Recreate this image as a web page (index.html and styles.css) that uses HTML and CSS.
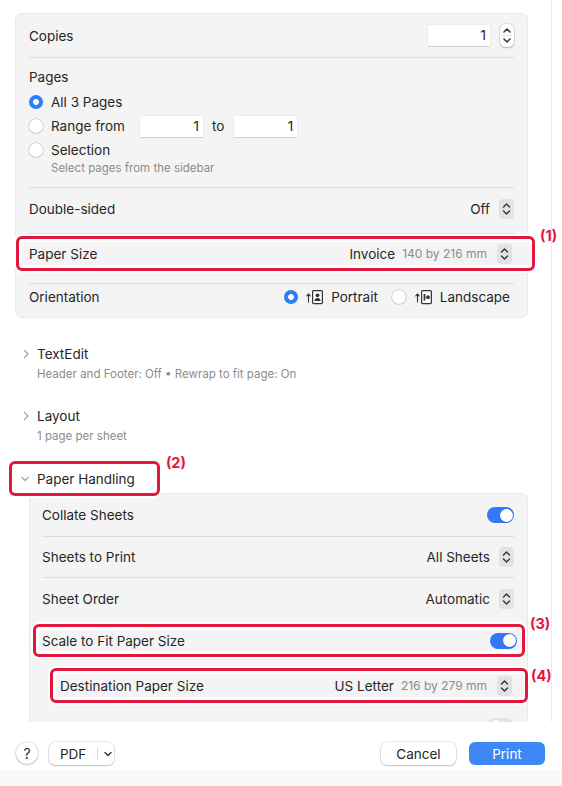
FILE: index.html
```html
<!DOCTYPE html>
<html lang="en">
<head>
    <meta charset="UTF-8">
    <meta name="viewport" content="width=device-width, initial-scale=1.0">
    <title>Print</title>
    <link rel="stylesheet" href="styles.css">
</head>
<body>
<div class="window">
    <main class="scroller">

        <!-- main print options -->
        <section class="panel">
            <div class="row copies">
                <span>Copies</span>
                <div class="spin">
                    <span class="field copies-field">1</span>
                    <span class="stepper">
                        <svg width="14" height="23" viewBox="0 0 14 23"><path d="M4 8 L7 5 L10 8" /><line x1="2" y1="11.5" x2="12" y2="11.5" class="split" /><path d="M4 15 L7 18 L10 15" /></svg>
                    </span>
                </div>
            </div>

            <div class="pages">
                <div class="pages-title">Pages</div>
                <div class="radio-row"><span class="radio on"></span>All 3 Pages</div>
                <div class="radio-row"><span class="radio"></span>Range from<span class="field range-field range-from">1</span><span class="to">to</span><span class="field range-field">1</span></div>
                <div class="radio-row"><span class="radio"></span>Selection</div>
                <div class="hint">Select pages from the sidebar</div>
            </div>

            <div class="row double">
                <span>Double-sided</span>
                <div class="value">
                    <span>Off</span>
                    <span class="popup"><svg width="9" height="14" viewBox="0 0 9 14"><path d="M1.5 5 L4.5 2 L7.5 5" /><path d="M1.5 9 L4.5 12 L7.5 9" /></svg></span>
                </div>
            </div>

            <div class="row marked">
                <div class="mark mark-paper">
                    <div class="mark-inner">
                        <span>Paper Size</span>
                        <div class="value">
                            <span>Invoice</span>
                            <span class="dim">140 by 216 mm</span>
                            <span class="popup"><svg width="9" height="14" viewBox="0 0 9 14"><path d="M1.5 5 L4.5 2 L7.5 5" /><path d="M1.5 9 L4.5 12 L7.5 9" /></svg></span>
                        </div>
                    </div>
                    <span class="tag">(1)</span>
                </div>
            </div>

            <div class="row orient">
                <span>Orientation</span>
                <div class="orient-choices">
                    <span class="radio on"></span>
                    <svg class="orient-icon" width="17" height="16" viewBox="0 0 17 16">
                        <path class="arrow" d="M2.5 13 V5 M0.8 6.8 L2.5 5 L4.2 6.8" />
                        <rect class="sheet" x="6.6" y="1.6" width="9.8" height="13" rx="1" />
                        <circle cx="11.5" cy="6.3" r="1.9" class="fill" />
                        <path class="fill" d="M8.4 12 Q8.6 8.9 11.5 8.9 Q14.4 8.9 14.6 12 Z" />
                    </svg>
                    <span class="orient-label">Portrait</span>
                    <span class="radio land-radio"></span>
                    <svg class="orient-icon" width="17" height="16" viewBox="0 0 17 16">
                        <path class="arrow" d="M2.5 13 V5 M0.8 6.8 L2.5 5 L4.2 6.8" />
                        <rect class="sheet" x="6.6" y="1.6" width="9.8" height="13" rx="1" />
                        <rect class="fill" x="8.6" y="5" width="1.8" height="6.4" />
                        <circle cx="13" cy="8.2" r="1.9" class="fill" />
                    </svg>
                    <span>Landscape</span>
                </div>
            </div>
        </section>

        <!-- collapsed groups -->
        <section class="group first">
            <div class="group-head">
                <svg class="chev" width="8" height="10" viewBox="0 0 8 10"><path d="M2.5 1.5 L6 5 L2.5 8.5" /></svg>
                <span>TextEdit</span>
            </div>
            <div class="group-sub">Header and Footer: Off &bull; Rewrap to fit page: On</div>
        </section>

        <section class="group">
            <div class="group-head">
                <svg class="chev" width="8" height="10" viewBox="0 0 8 10"><path d="M2.5 1.5 L6 5 L2.5 8.5" /></svg>
                <span>Layout</span>
            </div>
            <div class="group-sub">1 page per sheet</div>
        </section>

        <section class="group open">
            <div class="mark-head">
                <svg class="chev" width="8" height="10" viewBox="0 0 8 10"><path d="M1 3.5 L4 6.5 L7 3.5" /></svg>
                <span>Paper Handling</span>
                <span class="tag">(2)</span>
            </div>
        </section>

        <!-- paper handling options -->
        <section class="panel sub">
            <div class="row collate">
                <span>Collate Sheets</span>
                <span class="toggle"><span class="knob"></span></span>
            </div>
            <div class="row sheets">
                <span>Sheets to Print</span>
                <div class="value">
                    <span>All Sheets</span>
                    <span class="popup"><svg width="9" height="14" viewBox="0 0 9 14"><path d="M1.5 5 L4.5 2 L7.5 5" /><path d="M1.5 9 L4.5 12 L7.5 9" /></svg></span>
                </div>
            </div>
            <div class="row order">
                <span>Sheet Order</span>
                <div class="value">
                    <span>Automatic</span>
                    <span class="popup"><svg width="9" height="14" viewBox="0 0 9 14"><path d="M1.5 5 L4.5 2 L7.5 5" /><path d="M1.5 9 L4.5 12 L7.5 9" /></svg></span>
                </div>
            </div>

            <div class="mark mark-scale">
                <div class="mark-inner">
                    <span>Scale to Fit Paper Size</span>
                    <span class="toggle"><span class="knob"></span></span>
                </div>
                <span class="tag">(3)</span>
            </div>

            <div class="mark mark-dest">
                <div class="mark-inner">
                    <span>Destination Paper Size</span>
                    <div class="value">
                        <span>US Letter</span>
                        <span class="dim">216 by 279 mm</span>
                        <span class="popup"><svg width="9" height="14" viewBox="0 0 9 14"><path d="M1.5 5 L4.5 2 L7.5 5" /><path d="M1.5 9 L4.5 12 L7.5 9" /></svg></span>
                    </div>
                </div>
                <span class="tag">(4)</span>
            </div>

            <div class="peek">
                <span class="toggle off"><span class="knob"></span></span>
            </div>
        </section>
    </main>

    <footer class="footer">
        <button class="help">?</button>
        <div class="pdf">
            <span>PDF</span>
            <span class="pdf-split"></span>
            <svg width="8" height="6" viewBox="0 0 8 6"><path d="M1 1.5 L4 4.5 L7 1.5" /></svg>
        </div>
        <button class="btn cancel">Cancel</button>
        <button class="btn print">Print</button>
    </footer>
    <div class="footer-strip"></div>
</div>
</body>
</html>
```

FILE: styles.css
```css
* {
    box-sizing: border-box;
}
body {
    margin: 0;
    background-color: #fff;
    font-family: Inter, "Liberation Sans", sans-serif;
    font-size: 13.5px;
    color: #262626;
}
.window {
    width: 562px;
    height: 786px;
    display: flex;
    flex-direction: column;
    overflow: hidden;
}
/* clips at the bottom only, so the side notes can pass the divider */
.scroller {
    flex: none;
    width: 552px;
    height: 722px;
    padding: 13px 0 0 15px;
    border-right: 1px solid #ececec;
    clip-path: inset(0 -12px 0 0);
}

/* panels and rows */
.panel {
    width: 513px;
    background-color: #f4f4f4;
    border: 1px solid #e9e9e9;
    border-radius: 7px;
    padding: 0 13px;
}
.row {
    display: flex;
    align-items: center;
    justify-content: space-between;
    border-bottom: 1px solid #dddddd;
}
.copies {
    height: 44px;
}
.spin {
    display: flex;
    align-items: center;
    gap: 10px;
}
.field {
    display: inline-block;
    height: 21px;
    line-height: 21px;
    background-color: #fff;
    text-align: right;
    padding-right: 4px;
    box-shadow: 0 1px 0 rgba(0, 0, 0, 0.12), 0 0 0 0.5px rgba(0, 0, 0, 0.06);
}
.copies-field {
    width: 62px;
}
.stepper {
    width: 14px;
    height: 23px;
    border-radius: 5px;
    background-color: #fff;
    box-shadow: 0 0 0 0.5px rgba(0, 0, 0, 0.18), 0 1px 1.5px rgba(0, 0, 0, 0.18);
}
.stepper svg {
    display: block;
}
.stepper path {
    fill: none;
    stroke: #333;
    stroke-width: 1.5;
    stroke-linecap: round;
    stroke-linejoin: round;
}
.stepper .split {
    stroke: #e2e2e2;
    stroke-width: 1;
}

.pages {
    padding: 10px 0 12px;
    border-bottom: 1px solid #dddddd;
}
.pages-title {
    line-height: 18px;
    margin-bottom: 4px;
}
.radio-row {
    display: flex;
    align-items: center;
    height: 24px;
}
.radio {
    flex: none;
    width: 14px;
    height: 14px;
    border-radius: 50%;
    background-color: #fff;
    margin-right: 8px;
    box-shadow: 0 0 0 0.5px rgba(0, 0, 0, 0.22), 0 0.5px 1.5px rgba(0, 0, 0, 0.15);
}
.radio.on {
    background: radial-gradient(circle, #fff 2.6px, #2f7cf6 3.2px);
    box-shadow: none;
}
.range-field {
    width: 63px;
}
.range-from {
    margin-left: 15px;
}
.to {
    margin: 0 10px 0 9px;
}
.hint {
    margin-top: -1px;
    padding-left: 22px;
    line-height: 14px;
    font-size: 11.5px;
    color: #8c8c8c;
}

.double {
    height: 46px;
    padding-bottom: 4px;
}
.value {
    display: flex;
    align-items: center;
    gap: 9px;
}
.dim {
    font-size: 12px;
    color: #8c8c8c;
    margin-left: -2px;
    margin-right: 1px;
}
.popup {
    width: 15px;
    height: 20px;
    border-radius: 4px;
    background-color: #e3e3e3;
    display: flex;
    align-items: center;
    justify-content: center;
}
.popup path {
    fill: none;
    stroke: #333;
    stroke-width: 1.4;
    stroke-linecap: round;
    stroke-linejoin: round;
}

/* red annotation boxes */
.marked {
    height: 50px;
    align-items: flex-start;
    padding-top: 2px;
}
.mark {
    position: relative;
    border: 3px solid #e3173e;
    border-radius: 6px;
    background-color: #fff;
    box-shadow: 0 0 0 2px #fff;
}
.mark-inner {
    display: flex;
    align-items: center;
    justify-content: space-between;
    background-color: #f4f4f4;
    border-radius: 2px;
}
.mark-paper {
    flex: 1;
    margin: 0 -21px 0 -13px;
    padding: 3px 1px 3px 3px;
}
.mark-paper .mark-inner {
    height: 23px;
    padding: 0 19px 0 7px;
}
.tag {
    position: absolute;
    left: calc(100% + 8px);
    top: -12px;
    color: #e3173e;
    font-weight: 700;
    font-size: 14.5px;
    line-height: 18px;
}

.orient {
    height: 33px;
    padding-bottom: 8px;
    border-bottom: none;
}
.orient-choices {
    display: flex;
    align-items: center;
    padding-right: 4px;
}
.orient-icon {
    margin-right: 8px;
}
.orient-icon .arrow {
    fill: none;
    stroke: #333;
    stroke-width: 1.1;
    stroke-linecap: round;
    stroke-linejoin: round;
}
.orient-icon .sheet {
    fill: #fff;
    stroke: #333;
    stroke-width: 1.2;
}
.orient-icon .fill {
    fill: #333;
}
.orient-label {
    margin-right: 14px;
}
.land-radio {
    margin-right: 9px;
}

/* disclosure groups */
.group {
    padding-left: 7px;
    margin-top: 26px;
}
.group.first {
    margin-top: 27px;
}
.group.open {
    margin-top: 18px;
}
.group-head {
    display: flex;
    align-items: center;
    gap: 7px;
    height: 18px;
}
.chev {
    flex: none;
}
.chev path {
    fill: none;
    stroke: #a0a0a0;
    stroke-width: 1.2;
    stroke-linecap: round;
    stroke-linejoin: round;
}
.group-sub {
    margin-top: 4px;
    padding-left: 15px;
    line-height: 14px;
    font-size: 11.5px;
    color: #8c8c8c;
}
.mark-head {
    position: relative;
    z-index: 1;
    display: inline-flex;
    align-items: center;
    gap: 8px;
    height: 35px;
    margin-left: -13px;
    padding: 0 22px 0 9px;
    border: 3px solid #e3173e;
    border-radius: 6px;
    background-color: #fff;
    box-shadow: 0 0 0 2px #fff;
}
.mark-head .tag {
    top: -10px;
    left: calc(100% + 9px);
}

/* paper handling panel */
.panel.sub {
    width: 499px;
    margin: -3px 0 0 14px;
    padding: 0 13px 0 12px;
}
.collate {
    height: 43px;
}
.sheets {
    height: 41px;
}
.order {
    height: 43px;
    border-bottom-color: transparent;
}
.toggle {
    width: 27px;
    height: 16px;
    border-radius: 8px;
    background-color: #3478f6;
    padding: 1.5px;
    display: flex;
    justify-content: flex-end;
}
.knob {
    width: 13px;
    height: 13px;
    border-radius: 50%;
    background-color: #fff;
    box-shadow: 0 0.5px 1px rgba(0, 0, 0, 0.25);
}
.toggle.off {
    background-color: #e4e4e4;
    justify-content: flex-start;
}
.mark-scale {
    margin: 3px -11px 0 -9px;
    padding: 3px 1px 3px 3px;
}
.mark-scale .mark-inner {
    height: 21px;
    padding: 0 4px 0 3px;
}
.mark-scale .tag {
    top: -12px;
    left: calc(100% + 8px);
}
.mark-dest {
    margin: 11px -14px 0 8px;
    padding: 3px 1px 3px 3px;
}
.mark-dest .mark-inner {
    height: 23px;
    padding: 0 12px 0 4px;
}
.mark-dest .tag {
    top: -4px;
    left: calc(100% + 6px);
}
.peek {
    display: flex;
    justify-content: flex-end;
    height: 60px;
    padding-top: 15px;
}

/* footer */
.footer {
    flex: none;
    height: 48px;
    display: flex;
    align-items: flex-start;
    padding: 20px 17px 0 16px;
}
button {
    font-family: inherit;
    font-size: 13.5px;
    color: #262626;
    border: none;
    cursor: pointer;
    padding: 0;
}
.help {
    width: 22px;
    height: 22px;
    border-radius: 50%;
    background-color: #fff;
    font-size: 14px;
    box-shadow: 0 0 0 0.5px rgba(0, 0, 0, 0.16), 0 1px 2px rgba(0, 0, 0, 0.2);
}
.pdf {
    margin-left: 11px;
    width: 65px;
    height: 23px;
    display: flex;
    align-items: center;
    padding-left: 11px;
    border-radius: 6px;
    background-color: #fff;
    box-shadow: 0 0 0 0.5px rgba(0, 0, 0, 0.16), 0 1px 2px rgba(0, 0, 0, 0.18);
}
.pdf-split {
    width: 1px;
    height: 12px;
    background-color: #d8d8d8;
    margin: 0 6px 0 11px;
}
.pdf path {
    fill: none;
    stroke: #333;
    stroke-width: 1.4;
    stroke-linecap: round;
    stroke-linejoin: round;
}
.btn {
    height: 23px;
    border-radius: 6px;
}
.cancel {
    margin-left: auto;
    width: 75px;
    background-color: #fff;
    box-shadow: 0 0 0 0.5px rgba(0, 0, 0, 0.16), 0 1px 2px rgba(0, 0, 0, 0.18);
}
.print {
    margin-left: 13px;
    width: 76px;
    background-color: #3d87f7;
    color: #fff;
}
.footer-strip {
    flex: none;
    height: 16px;
    background-color: #f8f8f8;
}
```
